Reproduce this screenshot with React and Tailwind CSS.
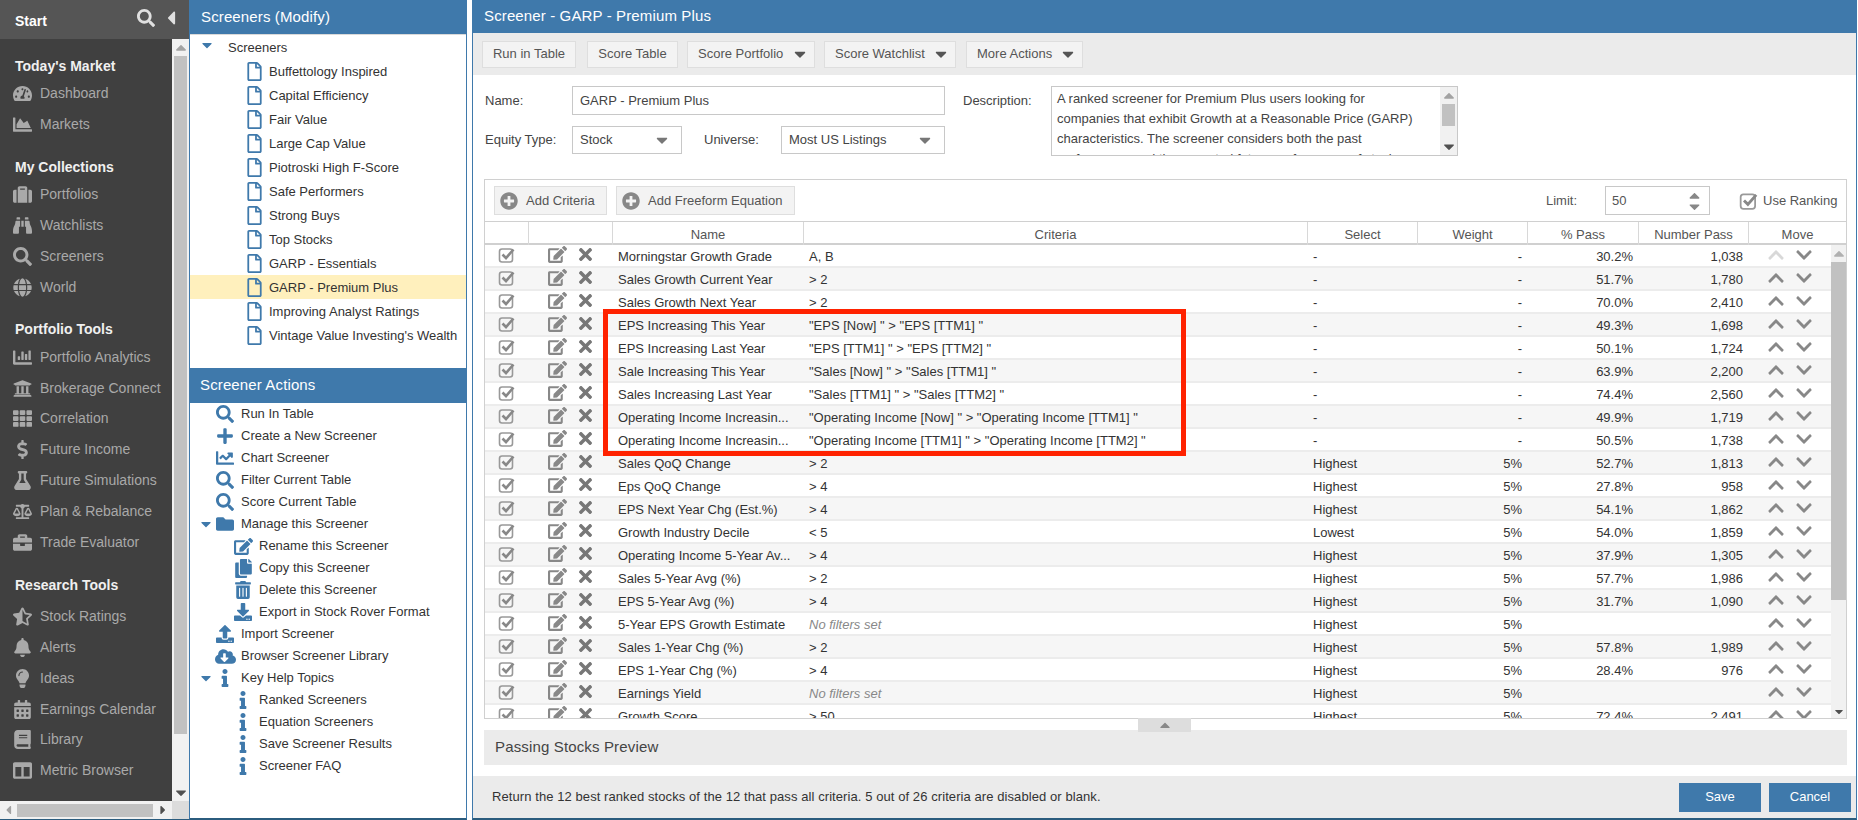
import React from 'react';
import {
  FaTachometerAlt, FaChartArea, FaSuitcase, FaBinoculars, FaSearch, FaGlobe, FaChartBar, FaUniversity, FaTh,
  FaDollarSign, FaFlask, FaBalanceScale, FaBriefcase, FaStarHalfAlt, FaBell, FaLightbulb, FaCalendarAlt, FaBook,
  FaColumns, FaCaretDown, FaCaretUp, FaCaretLeft, FaCaretRight, FaRegFile, FaPlus, FaChartLine, FaFolder, FaEdit,
  FaCopy, FaTrashAlt, FaDownload, FaUpload, FaCloudDownloadAlt, FaInfo, FaPlusCircle, FaTimes,
  FaChevronUp, FaChevronDown,
} from 'react-icons/fa';

const NAV = [
  { title: "Today's Market", items: [['Dashboard', FaTachometerAlt], ['Markets', FaChartArea]] },
  { title: 'My Collections', items: [['Portfolios', FaSuitcase], ['Watchlists', FaBinoculars], ['Screeners', FaSearch], ['World', FaGlobe]] },
  { title: 'Portfolio Tools', items: [['Portfolio Analytics', FaChartBar], ['Brokerage Connect', FaUniversity], ['Correlation', FaTh], ['Future Income', FaDollarSign], ['Future Simulations', FaFlask], ['Plan & Rebalance', FaBalanceScale], ['Trade Evaluator', FaBriefcase]] },
  { title: 'Research Tools', items: [['Stock Ratings', FaStarHalfAlt], ['Alerts', FaBell], ['Ideas', FaLightbulb], ['Earnings Calendar', FaCalendarAlt], ['Library', FaBook], ['Metric Browser', FaColumns]] },
];

const SCREENERS = ['Buffettology Inspired', 'Capital Efficiency', 'Fair Value', 'Large Cap Value', 'Piotroski High F-Score', 'Safe Performers', 'Strong Buys', 'Top Stocks', 'GARP - Essentials', 'GARP - Premium Plus', 'Improving Analyst Ratings', "Vintage Value Investing's Wealth"];

const ACTIONS = [
  { label: 'Run In Table', icon: FaSearch, size: 18 },
  { label: 'Create a New Screener', icon: FaPlus, size: 18 },
  { label: 'Chart Screener', icon: FaChartLine, size: 18 },
  { label: 'Filter Current Table', icon: FaSearch, size: 18 },
  { label: 'Score Current Table', icon: FaSearch, size: 18 },
  { label: 'Manage this Screener', icon: FaFolder, size: 18, open: true },
  { label: 'Rename this Screener', icon: FaEdit, size: 19, sub: true },
  { label: 'Copy this Screener', icon: FaCopy, size: 19, sub: true },
  { label: 'Delete this Screener', icon: FaTrashAlt, size: 18, sub: true },
  { label: 'Export in Stock Rover Format', icon: FaDownload, size: 18, sub: true },
  { label: 'Import Screener', icon: FaUpload, size: 18 },
  { label: 'Browser Screener Library', icon: FaCloudDownloadAlt, size: 21 },
  { label: 'Key Help Topics', icon: FaInfo, size: 18, open: true },
  { label: 'Ranked Screeners', icon: FaInfo, size: 18, sub: true },
  { label: 'Equation Screeners', icon: FaInfo, size: 18, sub: true },
  { label: 'Save Screener Results', icon: FaInfo, size: 18, sub: true },
  { label: 'Screener FAQ', icon: FaInfo, size: 18, sub: true },
];

const ROWS = [
  ['Morningstar Growth Grade', 'A, B', '-', '-', '30.2%', '1,038'],
  ['Sales Growth Current Year', '> 2', '-', '-', '51.7%', '1,780'],
  ['Sales Growth Next Year', '> 2', '-', '-', '70.0%', '2,410'],
  ['EPS Increasing This Year', '"EPS [Now] " > "EPS [TTM1] "', '-', '-', '49.3%', '1,698'],
  ['EPS Increasing Last Year', '"EPS [TTM1] " > "EPS [TTM2] "', '-', '-', '50.1%', '1,724'],
  ['Sale Increasing This Year', '"Sales [Now] " > "Sales [TTM1] "', '-', '-', '63.9%', '2,200'],
  ['Sales Increasing Last Year', '"Sales [TTM1] " > "Sales [TTM2] "', '-', '-', '74.4%', '2,560'],
  ['Operating Income Increasin...', '"Operating Income [Now] " > "Operating Income [TTM1] "', '-', '-', '49.9%', '1,719'],
  ['Operating Income Increasin...', '"Operating Income [TTM1] " > "Operating Income [TTM2] "', '-', '-', '50.5%', '1,738'],
  ['Sales QoQ Change', '> 2', 'Highest', '5%', '52.7%', '1,813'],
  ['Eps QoQ Change', '> 4', 'Highest', '5%', '27.8%', '958'],
  ['EPS Next Year Chg (Est.%)', '> 4', 'Highest', '5%', '54.1%', '1,862'],
  ['Growth Industry Decile', '< 5', 'Lowest', '5%', '54.0%', '1,859'],
  ['Operating Income 5-Year Av...', '> 4', 'Highest', '5%', '37.9%', '1,305'],
  ['Sales 5-Year Avg (%)', '> 2', 'Highest', '5%', '57.7%', '1,986'],
  ['EPS 5-Year Avg (%)', '> 4', 'Highest', '5%', '31.7%', '1,090'],
  ['5-Year EPS Growth Estimate', null, 'Highest', '5%', '', ''],
  ['Sales 1-Year Chg (%)', '> 2', 'Highest', '5%', '57.8%', '1,989'],
  ['EPS 1-Year Chg (%)', '> 4', 'Highest', '5%', '28.4%', '976'],
  ['Earnings Yield', null, 'Highest', '5%', '', ''],
  ['Growth Score', '> 50', 'Highest', '5%', '72.4%', '2,491'],
];

const COLS = 'grid grid-cols-[43px_84px_191px_504px_110px_110px_111px_110px_83px]';

// the package's check-square is too thin next to the reference, so it is drawn here
const CheckIcon = ({ size = 18 }) => (
  <svg width={size} height={size} viewBox="0 0 18 18" fill="none" className="shrink-0">
    <rect x="1.5" y="3" width="13" height="13" rx="2.5" stroke="#999" strokeWidth="1.6" />
    <path d="M4.5 8.5 L8 12 L15.5 3.5" stroke="#888" strokeWidth="2.6" />
  </svg>
);

const Sidebar = () => (
  <div className="w-[189px] h-full shrink-0 flex flex-col bg-[#404040]">
    <div className="h-[39px] shrink-0 bg-[#555555] flex items-center pl-[15px] pr-[7px] text-white">
      <span className="text-[14px] font-bold mt-[3px]">Start</span>
      <FaSearch className="ml-auto mb-[4px] text-[#e0e0e0]" size={18} />
      <FaCaretLeft className="ml-[5px] mb-[4px] text-[#e0e0e0]" size={22} />
    </div>
    <div className="flex-1 flex min-h-0">
      <div className="flex-1 pt-[15px]">
        {NAV.map((section, i) => (
          <div key={section.title} className="mb-[15.4px]">
            <div className={`h-[24px] pl-[15px] flex items-center text-[14px] font-bold text-[#f0f0f0] ${i === 3 ? 'mb-[4px]' : ''}`}>{section.title}</div>
            {section.items.map(([label, Icon]) => (
              <div key={label} className="h-[30.85px] flex items-center text-[14px] text-[#a9a9a9]">
                <span className="w-[40px] pl-[13px] shrink-0"><Icon size={19} /></span>
                {label}
              </div>
            ))}
          </div>
        ))}
      </div>
      <div className="w-[17px] shrink-0 bg-[#f1f1f1] flex flex-col items-center">
        <FaCaretUp className="text-[#a3a3a3] h-[17px] shrink-0" size={14} />
        <div className="w-[13px] h-[678px] bg-[#c1c1c1]" />
        <FaCaretDown className="text-[#505050] mt-auto h-[17px]" size={14} />
      </div>
    </div>
    <div className="h-[18px] shrink-0 flex bg-[#f1f1f1]">
      <div className="w-[172px] flex items-center">
        <FaCaretLeft className="text-[#a3a3a3] w-[17px] shrink-0" size={14} />
        <div className="w-[136px] h-[13px] bg-[#c1c1c1]" />
        <FaCaretRight className="text-[#505050] ml-auto w-[18px]" size={14} />
      </div>
      <div className="flex-1 bg-[#dcdcdc]" />
    </div>
    <div className="h-[1px] shrink-0 bg-[#2b5c7e]" />
  </div>
);

const BluePanelHead = ({ children, className = '' }) => (
  <div className={`shrink-0 bg-[#3f79ab] text-white text-[15px] tracking-[0.13px] flex items-center ${className}`}>{children}</div>
);

const TreePanel = () => (
  <div className="w-[278px] h-full shrink-0 flex flex-col border-r border-[#3f79ab] border-l border-b-2 border-b-[#2b5c7e]">
    <BluePanelHead className="h-[35px] border-b border-[#d9d9d9] pl-[11px]">Screeners (Modify)</BluePanelHead>
    <div className="h-[333px] shrink-0 text-[13px] text-[#333]">
      <div className="h-[24px] flex items-center">
        <FaCaretDown className="ml-[9px] mb-[4px] text-[#3f79ab]" size={16} />
        <span className="ml-[13px] pt-[2px]">Screeners</span>
      </div>
      {SCREENERS.map((s) => (
        <div key={s} className={`h-[24px] flex items-center whitespace-nowrap overflow-hidden ${s === 'GARP - Premium Plus' ? 'bg-[#fff0bd]' : ''}`}>
          <FaRegFile className="ml-[55px] shrink-0 text-[#3f79ab]" size={19} />
          <span className="ml-[5px] pt-[2px]">{s}</span>
        </div>
      ))}
    </div>
    <BluePanelHead className="h-[35px] pl-[10px]">Screener Actions</BluePanelHead>
    <div className="text-[13px] text-[#333]">
      {ACTIONS.map((a) => (
        <div key={a.label} className="h-[22px] flex items-center whitespace-nowrap">
          <span className="w-[24px] shrink-0 flex justify-end">
            {a.open && <FaCaretDown className="text-[#3f79ab]" size={16} />}
          </span>
          <span className={`shrink-0 flex justify-center w-[22px] mr-[5px] ${a.sub ? 'ml-[18px]' : ''}`}>
            <a.icon className="text-[#3f79ab]" size={a.size} />
          </span>
          {a.label}
        </div>
      ))}
    </div>
  </div>
);

const ToolButton = ({ label, caret, className = '' }) => (
  <div className={`h-[27px] bg-[#f3f3f3] border border-[#dedede] text-[13px] text-[#555] flex items-center ${caret ? 'pl-[10px]' : 'justify-center'} ${className}`}>
    {label}
    {caret && <FaCaretDown className="ml-auto mr-[5px] text-[#555]" size={18} />}
  </div>
);

const Field = ({ value, caret, className = '' }) => (
  <div className={`border border-[#c8c8c8] text-[13px] text-[#444] flex items-center justify-between pl-[7px] pr-[10px] ${className}`}>
    {value}
    {caret && <FaCaretDown className="text-[#777]" size={18} />}
  </div>
);

const HeaderCell = ({ children }) => (
  <div className="border-l border-[#d8d8d8] first:border-l-0 flex items-center justify-center pt-[3px]">{children}</div>
);

const CriteriaGrid = () => (
  <div className="ml-[11px] w-[1363px] h-[540px] shrink-0 border border-[#d0d0d0] flex flex-col">
    <div className="h-[41px] shrink-0 flex items-center pl-[9px] pr-[7px] text-[13px] text-[#555]">
      <div className="w-[113px] h-[29px] bg-[#f3f3f3] border border-[#dedede] flex items-center pl-[5px]">
        <FaPlusCircle className="text-[#888]" size={18} />
        <span className="ml-[8px]">Add Criteria</span>
      </div>
      <div className="ml-[9px] w-[179px] h-[29px] bg-[#f3f3f3] border border-[#dedede] flex items-center pl-[5px]">
        <FaPlusCircle className="text-[#888]" size={18} />
        <span className="ml-[8px]">Add Freeform Equation</span>
      </div>
      <span className="ml-auto">Limit:</span>
      <div className="ml-[28px] w-[105px] h-[29px] border border-[#c8c8c8] flex items-center justify-between pl-[6px] pr-[6px]">
        50
        <span className="flex flex-col text-[#888] leading-none">
          <FaCaretUp size={17} className="-mb-[6px]" />
          <FaCaretDown size={17} />
        </span>
      </div>
      <span className="ml-[29px]"><CheckIcon size={20} /></span>
      <span className="ml-[4px] w-[76px] whitespace-nowrap">Use Ranking</span>
    </div>
    <div className={`${COLS} h-[24px] shrink-0 border-y border-[#d0d0d0] border-b-2 text-[13px] text-[#555]`}>
      <HeaderCell />
      <HeaderCell />
      <HeaderCell>Name</HeaderCell>
      <HeaderCell>Criteria</HeaderCell>
      <HeaderCell>Select</HeaderCell>
      <HeaderCell>Weight</HeaderCell>
      <HeaderCell>% Pass</HeaderCell>
      <HeaderCell>Number Pass</HeaderCell>
      <div className="border-l border-[#d8d8d8] w-[98px] flex items-center justify-center pt-[3px]">Move</div>
    </div>
    <div className="relative flex-1 min-h-0 flex">
      <div className="flex-1 overflow-hidden">
        {ROWS.map((r, i) => (
          <div key={i} className={`${COLS} h-[23px] pt-[2px] border-b-2 border-[#ececec] text-[13px] text-[#333] items-center ${i % 2 ? 'bg-[#f6f6f6]' : 'bg-white'}`}>
            <span className="flex pl-[13px] -mt-[4px]"><CheckIcon /></span>
            <span className="flex items-center pl-[20px] gap-[9px] -mt-[4px]">
              <FaEdit className="text-[#888]" size={19} />
              <FaTimes className="text-[#777]" size={19} />
            </span>
            <span className="pl-[6px] whitespace-nowrap">{r[0]}</span>
            <span className="pl-[6px] whitespace-nowrap">
              {r[1] === null ? <em className="text-[#888]">No filters set</em> : r[1]}
            </span>
            <span className="pl-[6px]">{r[2]}</span>
            <span className="pr-[5px] text-right">{r[3]}</span>
            <span className="pr-[5px] text-right">{r[4]}</span>
            <span className="pr-[5px] text-right">{r[5]}</span>
            <span className="flex items-center pl-[19px] gap-[10px] text-[#888] -mt-[4px]">
              <FaChevronUp className={i === 0 ? 'text-[#d8d8d8]' : ''} size={18} />
              <FaChevronDown size={18} />
            </span>
          </div>
        ))}
      </div>
      <div className="w-[15px] shrink-0 bg-[#f1f1f1] flex flex-col items-center">
        <FaCaretUp className="text-[#b0b0b0] h-[17px] shrink-0" size={12} />
        <div className="w-full h-[338px] bg-[#c1c1c1]" />
        <FaCaretDown className="text-[#505050] mt-auto h-[13px]" size={12} />
      </div>
      <div className="absolute left-[118px] top-[64px] w-[583px] h-[147px] border-[5px] border-[#ff2200]" />
    </div>
  </div>
);

const MainPanel = () => (
  <div className="flex-1 h-full flex flex-col border-l border-[#3f79ab] border-r border-r-[#3f79ab] border-b-2 border-b-[#2b5c7e]">
    <BluePanelHead className="h-[33px] pl-[11px]">Screener - GARP - Premium Plus</BluePanelHead>
    <div className="h-[42px] shrink-0 bg-[#ebebeb] flex items-center pl-[9px]">
      <ToolButton label="Run in Table" className="w-[94px]" />
      <ToolButton label="Score Table" className="w-[91px] ml-[11px]" />
      <ToolButton label="Score Portfolio" caret className="w-[128px] ml-[9px]" />
      <ToolButton label="Score Watchlist" caret className="w-[132px] ml-[9px]" />
      <ToolButton label="More Actions" caret className="w-[117px] ml-[10px]" />
    </div>
    <div className="h-[104px] shrink-0 flex pt-[11px] pl-[12px] text-[13px] text-[#444]">
      <div className="w-[460px] shrink-0">
        <div className="flex items-center h-[29px]">
          <span className="w-[87px]">Name:</span>
          <Field value="GARP - Premium Plus" className="w-[373px] h-[29px]" />
        </div>
        <div className="flex items-center h-[28px] mt-[11px]">
          <span className="w-[87px]">Equity Type:</span>
          <Field value="Stock" caret className="w-[110px] h-[28px]" />
          <span className="ml-[22px] w-[77px]">Universe:</span>
          <Field value="Most US Listings" caret className="w-[164px] h-[28px]" />
        </div>
      </div>
      <span className="ml-[18px] w-[88px] h-[29px] flex items-center">Description:</span>
      <div className="w-[407px] h-[70px] border border-[#c8c8c8] flex overflow-hidden">
        <p className="flex-1 pl-[5px] pr-[15px] pt-[2px] leading-[20px]">
          A ranked screener for Premium Plus users looking for companies that exhibit Growth at a Reasonable Price (GARP) characteristics. The screener considers both the past performance and the expected future performance of stocks
        </p>
        <div className="w-[17px] shrink-0 bg-[#f1f1f1] flex flex-col items-center">
          <FaCaretUp className="text-[#a3a3a3] h-[17px] shrink-0" size={12} />
          <div className="w-[13px] h-[22px] bg-[#c1c1c1]" />
          <FaCaretDown className="text-[#505050] mt-auto h-[17px]" size={12} />
        </div>
      </div>
    </div>
    <CriteriaGrid />
    <div className="relative h-[11px] shrink-0">
      <div className="absolute z-10 left-[665px] -top-[1px] w-[53px] h-[14px] bg-[#dddddd] flex items-center justify-center">
        <FaCaretUp className="text-[#888]" size={16} />
      </div>
    </div>
    <div className="ml-[11px] w-[1363px] h-[35px] shrink-0 bg-[#ebebeb] flex items-center pl-[11px] text-[15px] tracking-[0.15px] text-[#444]">Passing Stocks Preview</div>
    <div className="mt-[11px] flex-1 bg-[#ebebeb] flex items-center pl-[19px] pr-[5px] text-[13px] text-[#333]">
      <span className="tracking-[0.08px]">Return the 12 best ranked stocks of the 12 that pass all criteria. 5 out of 26 criteria are disabled or blank.</span>
      <div className="ml-auto flex gap-[8px]">
        <div className="w-[82px] h-[29px] bg-[#3f79ab] text-white flex items-center justify-center">Save</div>
        <div className="w-[82px] h-[29px] bg-[#3f79ab] text-white flex items-center justify-center">Cancel</div>
      </div>
    </div>
  </div>
);

const App = () => (
  <div className="w-[1858px] h-[820px] overflow-hidden flex bg-white font-['Liberation_Sans',Arial,sans-serif]">
    <Sidebar />
    <TreePanel />
    <div className="w-[5px] shrink-0" />
    <MainPanel />
    <div className="w-[1px] shrink-0" />
  </div>
);

export default App;
